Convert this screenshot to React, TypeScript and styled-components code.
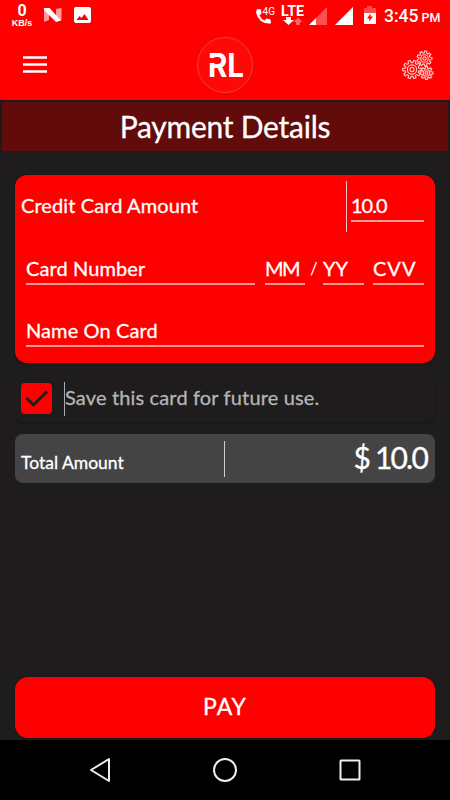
import React from "react";
import styled, { createGlobalStyle } from "styled-components";

const Global = createGlobalStyle`
  * { box-sizing: border-box; }
  body { margin: 0; background: #1e1c1d; font-family: Lato, "Open Sans", sans-serif; color: #fff; }
`;

const Screen = styled.div`
  width: 450px;
  height: 800px;
  display: flex;
  flex-direction: column;
  background: #1e1c1d;
  overflow: hidden;
`;

const StatusBar = styled.div`
  height: 31px;
  display: flex;
  align-items: flex-start;
  background: #f00;
  font-family: Roboto, sans-serif;
`;

const Speed = styled.div`
  width: 44px;
  padding-top: 2px;
  display: flex;
  flex-direction: column;
  align-items: center;
  font-weight: 700;
  font-size: 16px;
  line-height: 17px;
`;

const SpeedUnit = styled.div`
  font-family: "Liberation Sans", sans-serif;
  font-size: 9px;
  line-height: 8px;
`;

const StatusDrawing = styled.svg<{ $left?: number }>`
  display: block;
  flex: none;
  margin-left: ${(p) => p.$left ?? 0}px;
`;

const Clock = styled.div`
  margin-left: 6px;
  padding-top: 7px;
  font-size: 17.5px;
  font-weight: 500;
  line-height: 18px;
  white-space: nowrap;
`;

const Period = styled.span`
  font-size: 12.5px;
  margin-left: 3px;
`;

const AppBar = styled.header`
  height: 69px;
  display: grid;
  grid-template-columns: 1fr 58px 1fr;
  align-items: start;
  background: #f00;
`;

const MenuIcon = styled.svg`
  margin: 25px 0 0 23px;
`;

const Logo = styled.svg`
  margin-top: 5px;
`;

const GearIcon = styled.svg`
  justify-self: end;
  margin: 18px 16px 0 0;
`;

const Title = styled.h1`
  height: 49px;
  margin: 2px 2px 24px;
  padding-bottom: 2px;
  display: flex;
  align-items: center;
  justify-content: center;
  background: #610b0b;
  box-shadow: 0 0 2px #111b1b;
`;

const Label = styled.span<{ $size: number; $spacing?: number; $muted?: boolean; $stroke?: number }>`
  font-size: ${(p) => p.$size}px;
  font-weight: 400;
  letter-spacing: ${(p) => p.$spacing ?? 0}px;
  line-height: 1.2;
  white-space: nowrap;
  color: ${(p) => (p.$muted ? "#b5b5b5" : "#fff")};
  -webkit-text-stroke: ${(p) => p.$stroke ?? 0.3}px currentColor;
`;

const Card = styled.section`
  height: 188px;
  margin: 0 15px;
  padding: 6px 11px 0;
  border-radius: 12px;
  background: #f00;
  box-shadow: 0 1px 2px #071819;
`;

const AmountRow = styled.div`
  height: 51px;
  display: flex;
  align-items: center;
  margin-left: -5px;
`;

const AmountCaption = styled.div`
  width: 326px;
  height: 51px;
  padding-bottom: 3px;
  display: flex;
  align-items: center;
  border-right: 1px solid #ffc4c4;
`;

const Field = styled.div<{ $width: number; $left?: number }>`
  width: ${(p) => p.$width}px;
  height: 32px;
  margin-left: ${(p) => p.$left ?? 0}px;
  padding-top: 3px;
  border-bottom: 2px solid #ff9696;
  flex: none;
`;

const AmountField = styled(Field)`
  height: 31px;
  padding-top: 2px;
`;

const FieldRow = styled.div<{ $top: number }>`
  display: flex;
  margin-top: ${(p) => p.$top}px;
`;

const Slash = styled.div`
  width: 19px;
  margin-right: -1px;
  padding: 6px 0 0 5px;
`;

const SaveRow = styled.div`
  height: 47px;
  margin: 12px 15px 0;
  padding: 6px;
  display: flex;
  align-items: center;
  border-radius: 8px;
  box-shadow: 0 1px 2px #171516;
`;

const Checkbox = styled.svg`
  flex: none;
`;

const SaveText = styled.div`
  height: 34px;
  margin-left: 12px;
  padding-bottom: 3px;
  display: flex;
  align-items: center;
  border-left: 1px solid #aaa;
`;

const TotalRow = styled.section`
  height: 49px;
  margin: 12px 15px 0;
  padding: 0 7px 0 6px;
  display: flex;
  align-items: center;
  border-radius: 8px;
  background: #444;
`;

const TotalCaption = styled.div`
  width: 204px;
  height: 36px;
  padding-top: 11px;
  line-height: 20px;
  border-right: 1px solid #ccc;
`;

const TotalValue = styled.div`
  flex: 1;
  padding-bottom: 3px;
  margin-right: 1px;
  text-align: right;
`;

const PayButton = styled.button`
  height: 61px;
  margin: auto 15px 2px;
  padding: 0 0 2px;
  border: 0;
  border-radius: 13px;
  background: #f00;
  color: #fff;
  font-family: inherit;
  box-shadow: 0 0 2px #001c1d;
`;

const NavBar = styled.nav`
  height: 60px;
  display: flex;
  flex: none;
  background: #000;
`;

const gearPath = (cx: number, cy: number, outer: number, inner: number, teeth: number) => {
  const step = (Math.PI * 2) / teeth;
  const points: string[] = [];
  for (let i = 0; i < teeth; i++) {
    const shape: [number, number][] = [[-0.33, inner], [-0.19, outer], [0.19, outer], [0.33, inner]];
    shape.forEach(([offset, radius]) => {
      const angle = (i + offset) * step;
      points.push(`${(cx + radius * Math.cos(angle)).toFixed(2)} ${(cy + radius * Math.sin(angle)).toFixed(2)}`);
    });
  }
  return `M${points.join("L")}Z`;
};

const Gear = ({ cx, cy, r, teeth }: { cx: number; cy: number; r: number; teeth: number }) => (
  <g>
    <path d={gearPath(cx, cy, r, r * 0.74, teeth)} />
    <circle cx={cx} cy={cy} r={r * 0.5} />
    <circle cx={cx} cy={cy} r={r * 0.22} />
  </g>
);

export default function App() {
  return (
    <>
      <Global />
      <Screen>
        <StatusBar>
          <Speed><span>0</span><SpeedUnit>KB/s</SpeedUnit></Speed>
          <StatusDrawing width="50" height="31" viewBox="44 0 50 31">
            <path d="M44 10l5-2v12l-5 2zM56 9l5.500-1v12l-5.500 1z" fill="#ff9c9c" />
            <path d="M44 8h5.500L61 20.500 56 22 44 10z" fill="#fff" />
            <path fillRule="evenodd" d="M76 7h13q2 0 2 2v12q0 2-2 2H76q-2 0-2-2V9q0-2 2-2zm.5 13h12l-4-6-3 4-2-2z" fill="#fff" />
          </StatusDrawing>
          <StatusDrawing $left={159} width="125" height="31" viewBox="253 0 125 31">
            <path d="M257 9l4 .5.5 4-2 2q2 4 5 5l2-2 4 1 .5 4q-12 1-15-11z" fill="#fff" />
            <text x="262.500" y="15" fontSize="11" fill="#fff" textLength="12.500" lengthAdjust="spacingAndGlyphs">4G</text>
            <text x="281" y="16" fontSize="14" fontWeight="700" fill="#fff" textLength="23" lengthAdjust="spacingAndGlyphs">LTE</text>
            <path d="M286 17h5v3h3l-5.500 5-5.500-5h3z" fill="#fff" />
            <path d="M298 17.500l4.500 4.500H300v3h-4v-3h-2.500z" fill="#ff6262" />
            <path d="M327 7v18h-18z" fill="#ff5050" />
            <path d="M316 18v7h-7zM353 7v18h-18z" fill="#fff" />
            <path d="M367 6h5v2h4v7h-12V8h3z" fill="#ff4b4b" />
            <path fillRule="evenodd" d="M364 13h12v11h-12zM371 13l-4 5.500h2.500l-.5 3 4-5h-2.500z" fill="#fff" />
          </StatusDrawing>
          <Clock>3:45<Period>PM</Period></Clock>
        </StatusBar>
        <AppBar>
          <MenuIcon width="25" height="18" viewBox="0 0 25 18"><path d="M0 1.500h24M0 8.500h24M0 15.500h24" stroke="#fff" strokeWidth="2.700" /></MenuIcon>
          <Logo width="58" height="58" viewBox="196 36 58 58">
            <circle cx="225" cy="65" r="27.500" fill="#ff0808" stroke="#e54444" />
            <text x="208" y="77" fontFamily="Inter, sans-serif" fontSize="32" fontWeight="700" fill="#fff" textLength="36" lengthAdjust="spacingAndGlyphs">RL</text>
            <path d="M208 60.500h7.500" stroke="#ff0808" strokeWidth="5" />
          </Logo>
          <GearIcon width="32" height="32" viewBox="402 49 32 32" fill="none" stroke="#ffc4c4" strokeWidth="1.200">
            <Gear cx={412} cy={69.5} r={9.3} teeth={10} />
            <Gear cx={424.5} cy={58.5} r={7.5} teeth={9} />
            <Gear cx={426.500} cy={73} r={6.5} teeth={8} />
          </GearIcon>
        </AppBar>
        <Title><Label $size={30} $spacing={-0.25}>Payment Details</Label></Title>
        <Card>
          <AmountRow>
            <AmountCaption><Label $size={20} $spacing={0.1}>Credit Card Amount</Label></AmountCaption>
            <AmountField $width={73} $left={4}><Label $size={20} $spacing={-1}>10.0</Label></AmountField>
          </AmountRow>
          <FieldRow $top={21}>
            <Field $width={229}><Label $size={20} $spacing={0.1}>Card Number</Label></Field>
            <Field $width={40} $left={10}><Label $size={20} $spacing={-1.5}>MM</Label></Field>
            <Slash><Label $size={17} $stroke={0}>/</Label></Slash>
            <Field $width={41}><Label $size={20}>YY</Label></Field>
            <Field $width={51} $left={9}><Label $size={20} $spacing={1}>CVV</Label></Field>
          </FieldRow>
          <FieldRow $top={30}>
            <Field $width={398}><Label $size={20} $spacing={0.1}>Name On Card</Label></Field>
          </FieldRow>
        </Card>
        <SaveRow>
          <Checkbox width="31" height="31" viewBox="0 0 31 31">
            <rect width="31" height="31" rx="4" fill="#f00" />
            <path d="M5.500 15l7 7L26 8.500" fill="none" stroke="#1e1c1d" strokeWidth="3" />
          </Checkbox>
          <SaveText><Label $size={20} $spacing={0.15} $muted>Save this card for future use.</Label></SaveText>
        </SaveRow>
        <TotalRow>
          <TotalCaption><Label $size={17.5}>Total Amount</Label></TotalCaption>
          <TotalValue><Label $size={30} $spacing={-1.8}>$ 10.0</Label></TotalValue>
        </TotalRow>
        <PayButton><Label $size={23} $spacing={1}>PAY</Label></PayButton>
        <NavBar>
          <svg width="450" height="60" viewBox="0 740 450 60" fill="none" stroke="#eee" strokeWidth="2" strokeLinejoin="round">
            <path d="M109 759v22l-18-11z" />
            <circle cx="225" cy="770" r="11" />
            <rect x="340.500" y="760.500" width="19" height="19" rx=".5" />
          </svg>
        </NavBar>
      </Screen>
    </>
  );
}
